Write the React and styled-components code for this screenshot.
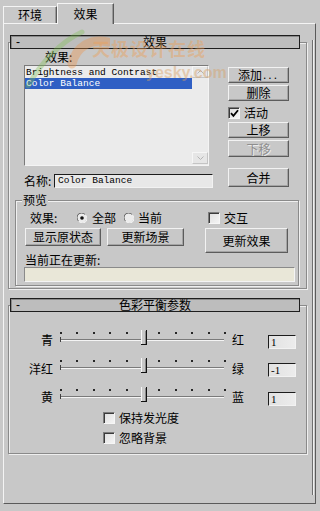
import React from "react";
import styled, { createGlobalStyle } from "styled-components";

const Global = createGlobalStyle`
  html, body { margin: 0; padding: 0; background: #c8c8c8; }
  body {
    font-family: "Noto Sans CJK SC", "Liberation Sans", sans-serif;
    font-size: 12px;
    color: #000;
  }
  * { box-sizing: border-box; }
`;

const MONO = `"Liberation Mono", "DejaVu Sans Mono", monospace`;

const Page = styled.div`
  position: relative;
  width: 320px;
  height: 511px;
  overflow: hidden;
  background: #c8c8c8;
  padding-top: 3px;
`;

const TabBar = styled.div`
  display: flex;
  align-items: flex-end;
  height: 20px;
  padding-left: 3px;
`;

const Tab = styled.div`
  position: relative;
  z-index: ${(p) => (p.$active ? 2 : 0)};
  width: ${(p) => p.$w}px;
  height: ${(p) => (p.$active ? 21 : 17)}px;
  margin-bottom: ${(p) => (p.$active ? -1 : 0)}px;
  border-top: 1px solid #f4f4f4;
  border-left: 1px solid #f4f4f4;
  border-right: 1px solid #5a5a5a;
  box-shadow: inset -1px 0 0 #9a9a9a;
  background: #c8c8c8;
  display: flex;
  align-items: center;
  justify-content: center;
  font-size: 12px;
  line-height: 1;
`;

const TabPanel = styled.div`
  margin-left: 3px;
  width: 313px;
  height: 481px;
  border-top: 1px solid #f4f4f4;
  border-left: 1px solid #f4f4f4;
  border-right: 1px solid #5a5a5a;
  border-bottom: 1px solid #5a5a5a;
  padding: 6px 0 0 4px;
  display: flex;
  align-items: flex-start;
`;

const RolloutColumn = styled.div`
  width: 299px;
  display: flex;
  flex-direction: column;
`;

const ScrollGutter = styled.div`
  margin: 10px 0 0 5px;
  width: 2px;
  height: 455px;
  border-left: 1px solid #6e6e6e;
  background: #efefef;
`;

const Rollout = styled.div`
  margin-top: ${(p) => p.$mt}px;
  border: 1px solid #8a8a8a;
  box-shadow: inset 1px 1px 0 #efefef, 1px 1px 0 #efefef;
`;

const RollHeader = styled.div`
  margin: -8px 6px 0 1px;
  height: 14px;
  border: 1px solid #1e1e1e;
  box-shadow: inset 1px 1px 0 #8a8a8a;
  background: #bdbdbd;
  display: grid;
  grid-template-columns: 1fr auto 1fr;
  align-items: center;
  font-size: 12px;
  line-height: 12px;
`;

const Collapse = styled.span`
  padding-left: 5px;
  font-family: "Liberation Sans", sans-serif;
`;

const Body1 = styled.div`
  padding: 0 0 2px 15px;
`;

const TopSection = styled.div`
  display: flex;
`;

const LeftCol = styled.div`
  width: 189px;
  display: flex;
  flex-direction: column;
`;

const RightCol = styled.div`
  width: 61px;
  margin-left: 15px;
  padding-top: 18px;
  display: flex;
  flex-direction: column;
`;

const FieldLabel = styled.div`
  height: 16px;
  line-height: 16px;
  padding-left: 21px;
`;

const ListBox = styled.div`
  width: 185px;
  height: 101px;
  display: flex;
  border-top: 1px solid #7a7a7a;
  border-left: 1px solid #7a7a7a;
  border-right: 1px solid #f4f4f4;
  border-bottom: 1px solid #f4f4f4;
  background: #ebebeb;
`;

const ListItems = styled.div`
  flex: 1;
  padding-top: 1px;
`;

const ListItem = styled.div`
  height: 11px;
  line-height: 11px;
  padding-left: 1px;
  font-family: ${MONO};
  font-size: 9.5px;
  white-space: nowrap;
  overflow: hidden;
  background: ${(p) => (p.$sel ? "#2f5fc4" : "transparent")};
  color: ${(p) => (p.$sel ? "#fff" : "#000")};
`;

const ScrollBar = styled.div`
  width: 16px;
  display: flex;
  flex-direction: column;
  justify-content: space-between;
  padding: 0 0 1px 0;
`;

const ArrowBox = styled.div`
  height: 12px;
  display: flex;
  align-items: center;
  justify-content: center;
  border: 1px solid #f6f6f6;
  border-right-color: #c4c4c4;
  border-bottom-color: #c4c4c4;
  background: #e6e6e6;
`;

const NameRow = styled.div`
  margin-top: 8px;
  height: 14px;
  display: flex;
  align-items: center;
`;

const NameLabel = styled.span`
  width: 30px;
  line-height: 14px;
`;

const SunkenField = styled.div`
  width: ${(p) => p.$w}px;
  height: ${(p) => p.$h}px;
  border-top: 1px solid #1c1c1c;
  border-left: 1px solid #1c1c1c;
  border-right: 1px solid #f2f2f2;
  border-bottom: 1px solid #f2f2f2;
  background: #e8e8e8;
  font-family: ${MONO};
  font-size: 9.5px;
  line-height: ${(p) => p.$h - 2}px;
  padding-left: 3px;
  white-space: nowrap;
`;

const Btn = styled.div`
  width: ${(p) => p.$w}px;
  height: ${(p) => p.$h}px;
  margin-top: ${(p) => p.$mt || 0}px;
  display: flex;
  align-items: center;
  justify-content: center;
  border-top: 1px solid #f2f2f2;
  border-left: 1px solid #f2f2f2;
  border-right: 1px solid #5c5c5c;
  border-bottom: 1px solid #5c5c5c;
  box-shadow: inset -1px -1px 0 #a4a4a4;
  background: #c8c8c8;
  font-size: 12px;
  line-height: 1;
  white-space: nowrap;
  color: ${(p) => (p.$disabled ? "#8e8e8e" : "#000")};
  text-shadow: ${(p) => (p.$disabled ? "1px 1px 0 #ececec" : "none")};
`;

const Dots = styled.span`
  font-family: "Liberation Sans", sans-serif;
  letter-spacing: 2px;
  margin-left: 1px;
`;

const CheckRow = styled.div`
  display: flex;
  align-items: center;
  height: ${(p) => p.$h || 14}px;
  margin-top: ${(p) => p.$mt || 0}px;
  padding-left: ${(p) => p.$pl || 0}px;
  line-height: 14px;
`;

const Box = styled.span`
  flex: none;
  width: 12px;
  height: 12px;
  margin-right: 4px;
  display: inline-flex;
  align-items: center;
  justify-content: center;
  border-top: 1px solid #7c7c7c;
  border-left: 1px solid #7c7c7c;
  border-right: 1px solid #f6f6f6;
  border-bottom: 1px solid #f6f6f6;
  box-shadow: inset 1px 1px 0 #3a3a3a;
  background: linear-gradient(135deg, #dedede, #f4f4f4);
`;

const Group = styled.div`
  position: relative;
  margin: 12px 0 0 -9px;
  width: 284px;
  border: 1px solid #8a8a8a;
  box-shadow: inset 1px 1px 0 #f0f0f0, 1px 1px 0 #f0f0f0;
  padding: 10px 0 3px 9px;
  display: grid;
  grid-template-columns: 159px 21px 83px;
  align-items: start;
`;

const GroupLegend = styled.span`
  position: absolute;
  top: -7px;
  left: 6px;
  padding: 0 1px;
  background: #c8c8c8;
  line-height: 12px;
`;

const RadioRow = styled.div`
  grid-column: 1;
  height: 14px;
  display: flex;
  align-items: center;
  padding-left: 5px;
  line-height: 14px;
`;

const RadioLabel = styled.span`
  width: 47px;
`;

const RadioWrap = styled.span`
  display: inline-flex;
  width: 10px;
  height: 10px;
  margin: 0 ${(p) => p.$mr}px 0 ${(p) => p.$ml}px;
`;

const GroupCheck = styled.div`
  grid-column: 3;
  height: 14px;
  display: flex;
  align-items: center;
  padding-left: 3px;
  line-height: 14px;
`;

const BtnRow = styled.div`
  grid-column: 1;
  margin-top: 3px;
  display: flex;
  gap: 6px;
`;

const BigBtnCell = styled.div`
  grid-column: 3;
  margin-top: 3px;
`;

const StatusLabel = styled.div`
  grid-column: 1 / -1;
  height: 13px;
  line-height: 13px;
`;

const StatusField = styled.div`
  grid-column: 1 / -1;
  margin: 1px 0 0 -1px;
  width: 271px;
  height: 15px;
  border-top: 1px solid #8a8a8a;
  border-left: 1px solid #8a8a8a;
  border-right: 1px solid #f4f4f4;
  border-bottom: 1px solid #f4f4f4;
  background: #e9e7d8;
`;

const Body2 = styled.div`
  padding: 14px 0 9px 0;
`;

const SliderGrid = styled.div`
  display: grid;
  grid-template-columns: 51px 166px 42px 28px;
  grid-template-rows: 28px 29px 28px;
`;

const SideLabel = styled.div`
  align-self: center;
  text-align: ${(p) => (p.$right ? "left" : "right")};
  padding: ${(p) => (p.$right ? "0 0 0 6px" : "0 7px 0 0")};
  line-height: 14px;
  white-space: nowrap;
`;

const SliderSvg = styled.svg`
  display: block;
  align-self: start;
`;

const SpinField = styled.div`
  align-self: start;
  margin-top: 9px;
  width: 28px;
  height: 14px;
  border-top: 1px solid #1c1c1c;
  border-left: 1px solid #1c1c1c;
  border-right: 1px solid #f2f2f2;
  border-bottom: 1px solid #f2f2f2;
  background: linear-gradient(90deg, #e2e2e2, #ececec);
  font-family: "Liberation Serif", serif;
  font-size: 11px;
  line-height: 12px;
  padding-left: 2px;
`;

const Watermark = styled.div`
  position: absolute;
  left: 0;
  top: 0;
  width: 320px;
  height: 100px;
  pointer-events: none;
`;

const WmTitle = styled.span`
  position: absolute;
  left: 92px;
  top: 39px;
  font-size: 18px;
  line-height: 18px;
  font-weight: 700;
  letter-spacing: 1px;
  color: rgba(236, 160, 90, 0.45);
  white-space: nowrap;
`;

const WmUrl = styled.span`
  position: absolute;
  left: 146px;
  top: 65px;
  font-family: "Liberation Sans", sans-serif;
  font-size: 16px;
  line-height: 15px;
  font-weight: 700;
  color: rgba(215, 160, 100, 0.45);
  white-space: nowrap;
`;

const WmLogo = styled.svg`
  position: absolute;
  left: 20px;
  top: 24px;
  opacity: 0.35;
`;

function Radio({ on }) {
  return (
    <svg width="10" height="10" viewBox="0 0 10 10">
      <circle cx="5" cy="5" r="4.5" fill="#ececec" />
      <path d="M1.3 7.8 A4.5 4.5 0 0 1 7.8 1.3" stroke="#5a5a5a" strokeWidth="1" fill="none" />
      <path d="M8.7 2.2 A4.5 4.5 0 0 1 2.2 8.7" stroke="#fafafa" strokeWidth="1" fill="none" />
      {on && <circle cx="5" cy="5" r="1.8" fill="#111" />}
    </svg>
  );
}

function Check({ on }) {
  return (
    <Box>
      {on && (
        <svg width="9" height="9" viewBox="0 0 9 9">
          <path d="M1 4.2 L3.4 6.8 L8 1.2" stroke="#000" strokeWidth="1.8" fill="none" />
        </svg>
      )}
    </Box>
  );
}

function Slider({ pos }) {
  const dots = Array.from({ length: 11 }, (_, i) => Math.round(i * 16.4));
  const tx = Math.round(pos * 164) - 1;
  return (
    <SliderSvg width="166" height="28" viewBox="0 0 166 28">
      {dots.map((x) => (
        <rect key={x} x={x} y="6" width="2" height="2" fill="#262626" />
      ))}
      <rect x="0" y="11" width="1" height="5" fill="#404040" />
      <rect x="1" y="13" width="163" height="1" fill="#7a7a7a" />
      <rect x="1" y="14" width="163" height="1" fill="#f4f4f4" />
      <rect x={tx} y="4" width="6" height="15" fill="#c8c8c8" />
      <rect x={tx} y="4" width="1" height="14" fill="#f6f6f6" />
      <rect x={tx + 5} y="4" width="1" height="15" fill="#111" />
      <rect x={tx} y="18" width="6" height="1" fill="#111" />
      <rect x={tx + 4} y="5" width="1" height="13" fill="#8a8a8a" />
    </SliderSvg>
  );
}

const sliders = [
  { l: "青", r: "红", v: "1" },
  { l: "洋红", r: "绿", v: "-1" },
  { l: "黄", r: "蓝", v: "1" },
];

export default function App() {
  return (
    <>
      <Global />
      <Page>
        <TabBar>
          <Tab $w={54}>环境</Tab>
          <Tab $w={57} $active>效果</Tab>
        </TabBar>
        <TabPanel>
          <RolloutColumn>
            <Rollout $mt={12}>
              <RollHeader>
                <Collapse>-</Collapse>
                <span>效果</span>
                <span />
              </RollHeader>
              <Body1>
                <TopSection>
                  <LeftCol>
                    <FieldLabel>效果:</FieldLabel>
                    <ListBox>
                      <ListItems>
                        <ListItem>Brightness and Contrast</ListItem>
                        <ListItem $sel>Color Balance</ListItem>
                      </ListItems>
                      <ScrollBar>
                        <ArrowBox>
                          <svg width="7" height="4" viewBox="0 0 7 4">
                            <path d="M0.5 3.5 L3.5 0.5 L6.5 3.5" stroke="#b4b4b4" fill="none" />
                          </svg>
                        </ArrowBox>
                        <ArrowBox>
                          <svg width="7" height="4" viewBox="0 0 7 4">
                            <path d="M0.5 0.5 L3.5 3.5 L6.5 0.5" stroke="#b4b4b4" fill="none" />
                          </svg>
                        </ArrowBox>
                      </ScrollBar>
                    </ListBox>
                    <NameRow>
                      <NameLabel>名称:</NameLabel>
                      <SunkenField $w={159} $h={14}>Color Balance</SunkenField>
                    </NameRow>
                  </LeftCol>
                  <RightCol>
                    <Btn $w={61} $h={16}>
                      添加<Dots>...</Dots>
                    </Btn>
                    <Btn $w={61} $h={16} $mt={2}>删除</Btn>
                    <CheckRow $h={18} $mt={3}>
                      <Check on />
                      活动
                    </CheckRow>
                    <Btn $w={61} $h={16}>上移</Btn>
                    <Btn $w={61} $h={17} $mt={2} $disabled>下移</Btn>
                    <Btn $w={61} $h={19} $mt={11}>合并</Btn>
                  </RightCol>
                </TopSection>
                <Group>
                  <GroupLegend>预览</GroupLegend>
                  <RadioRow>
                    <RadioLabel>效果:</RadioLabel>
                    <RadioWrap $ml={0} $mr={5}>
                      <Radio on />
                    </RadioWrap>
                    全部
                    <RadioWrap $ml={8} $mr={4}>
                      <Radio />
                    </RadioWrap>
                    当前
                  </RadioRow>
                  <GroupCheck>
                    <Check />
                    交互
                  </GroupCheck>
                  <BtnRow>
                    <Btn $w={76} $h={18}>显示原状态</Btn>
                    <Btn $w={77} $h={18}>更新场景</Btn>
                  </BtnRow>
                  <BigBtnCell>
                    <Btn $w={83} $h={25}>更新效果</Btn>
                  </BigBtnCell>
                  <StatusLabel>当前正在更新:</StatusLabel>
                  <StatusField />
                </Group>
              </Body1>
            </Rollout>

            <Rollout $mt={16}>
              <RollHeader>
                <Collapse>-</Collapse>
                <span>色彩平衡参数</span>
                <span />
              </RollHeader>
              <Body2>
                <SliderGrid>
                  {sliders.map((s) => (
                    <React.Fragment key={s.l}>
                      <SideLabel>{s.l}</SideLabel>
                      <Slider pos={0.5} />
                      <SideLabel $right>{s.r}</SideLabel>
                      <SpinField>{s.v}</SpinField>
                    </React.Fragment>
                  ))}
                </SliderGrid>
                <CheckRow $h={13} $pl={94}>
                  <Check />
                  保持发光度
                </CheckRow>
                <CheckRow $h={13} $mt={7} $pl={94}>
                  <Check />
                  忽略背景
                </CheckRow>
              </Body2>
            </Rollout>
          </RolloutColumn>
          <ScrollGutter />
        </TabPanel>

        <Watermark>
          <WmLogo width="90" height="70" viewBox="0 0 90 70">
            <path d="M8 62 C 20 40, 40 18, 62 8" stroke="#7cc050" strokeWidth="5" fill="none" strokeLinecap="round" />
            <path d="M52 40 C 56 22, 72 14, 88 18" stroke="#f09040" strokeWidth="9" fill="none" strokeLinecap="round" />
          </WmLogo>
          <WmTitle>天极设计在线</WmTitle>
          <WmUrl>yesky.com</WmUrl>
        </Watermark>
      </Page>
    </>
  );
}
